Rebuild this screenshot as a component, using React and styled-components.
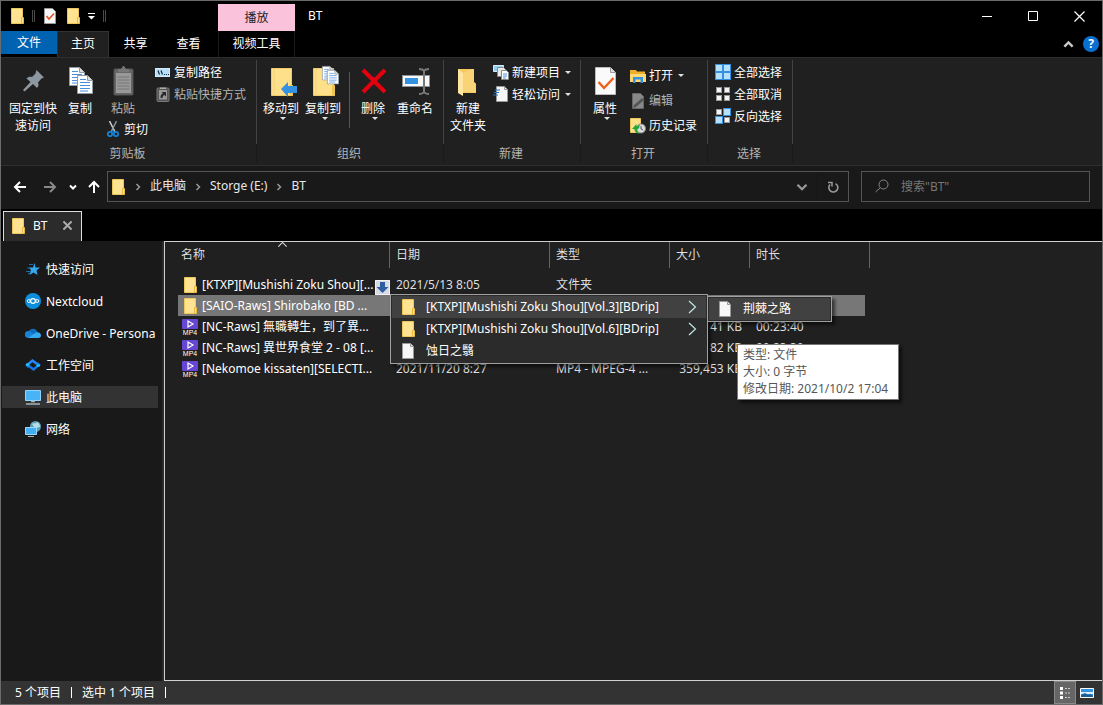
import React, { useState } from "react";
import styled, { createGlobalStyle, css } from "styled-components";

const GlobalStyle = createGlobalStyle`
  * {
    box-sizing: border-box;
  }
  body {
    margin: 0;
    background: #000;
    color: #fff;
    font: 12px/17px "Noto Sans", "Noto Sans CJK SC", sans-serif;
  }
  button,
  input {
    margin: 0;
    padding: 0;
    border: 0;
    background: none;
    color: inherit;
    font: inherit;
  }
  ul {
    margin: 0;
    padding: 0;
    list-style: none;
  }
  a {
    color: inherit;
    text-decoration: none;
  }
  svg {
    display: block;
    flex: none;
  }
`;

const Window = styled.div`
  display: flex;
  flex-direction: column;
  min-height: 100vh;
  border: 1px solid #6b6b6b;
`;

/* title bar */

const TitleBar = styled.header`
  display: flex;
  align-items: center;
  height: 30px;
`;
const QuickAccess = styled.div`
  display: flex;
  align-items: center;
  gap: 7px;
  width: 217px;
  padding-left: 8px;
`;
const QuickDivider = styled.span`
  width: 3px;
  height: 12px;
  border: solid #4a4a4a;
  border-width: 0 1px;
`;
const ContextTab = styled.div`
  display: flex;
  align-items: center;
  justify-content: center;
  align-self: flex-end;
  width: 77px;
  height: 27px;
  background: #fbc2db;
  color: #222;
`;
const Title = styled.h1`
  flex: 1;
  margin: 0;
  padding: 0 0 2px 13px;
  font-size: 12px;
  font-weight: 400;
`;
const WindowButton = styled.button`
  display: grid;
  place-items: center;
  width: 46px;
  height: 28px;
`;

/* ribbon tabs */

const TabRow = styled.nav`
  display: flex;
  align-items: flex-start;
  height: 26px;
`;
const RibbonTab = styled.button`
  width: ${({ $wide }) => ($wide ? 77 : 53)}px;
  height: 26px;
  padding-bottom: 2px;
  ${({ $file }) =>
    $file &&
    css`
      width: 56px;
      height: 23px;
      padding: 0;
      background: #0063b1;
    `}
  ${({ $active }) =>
    $active &&
    css`
      width: 52px;
      height: 27px;
      padding-bottom: 4px;
      background: #202020;
      border: 1px solid #333;
      border-bottom: 0;
    `}
  ${({ $wide }) =>
    $wide &&
    css`
      margin-left: 3px;
      border: solid #191919;
      border-width: 0 1px;
    `}
`;
const TabTools = styled.div`
  display: flex;
  align-items: center;
  align-self: stretch;
  gap: 9px;
  margin-left: auto;
  padding-right: 3px;
  color: #c8c8c8;
`;
const HelpButton = styled.button`
  width: 16px;
  height: 16px;
  border-radius: 50%;
  background: #0a6fd0;
  color: #fff;
  font-weight: 700;
  line-height: 16px;
`;

/* ribbon */

const RibbonBar = styled.section`
  display: flex;
  height: 109px;
  padding: 2px 0;
  background: #202020;
  border: solid #2e2e2e;
  border-width: 1px 0;
`;
const Group = styled.div`
  display: flex;
  flex-direction: column;
  width: ${({ $width }) => $width}px;
`;
const GroupBody = styled.div`
  display: flex;
  height: 84px;
  padding-left: ${({ $inset }) => $inset}px;
  border-right: 1px solid #434343;
`;
const GroupLabel = styled.div`
  flex: 1;
  padding-right: 2px;
  border-right: 1px solid #191919;
  color: #b4b4b4;
  line-height: 19px;
  text-align: center;
`;
const BigButton = styled.button`
  display: flex;
  flex-direction: column;
  align-items: center;
  width: ${({ $width = 42 }) => $width}px;
  padding-top: 5px;
  color: ${({ disabled }) => (disabled ? "#b4b4b4" : "#fff")};
  white-space: pre-line;

  > svg:first-child {
    margin-bottom: 3px;
  }
  > svg + svg {
    margin-left: 4px;
  }
`;
const SmallStack = styled.div`
  display: flex;
  flex-direction: column;
  margin-left: ${({ $left = 0 }) => $left}px;
  padding-top: ${({ $top = 1 }) => $top}px;
`;
const SmallButton = styled.button`
  display: flex;
  align-items: center;
  gap: 3px;
  height: ${({ $height = 22 }) => $height}px;
  color: ${({ disabled }) => (disabled ? "#b4b4b4" : "#fff")};
  white-space: nowrap;

  > svg + svg {
    margin-left: 2px;
  }
`;
const PasteColumn = styled.div`
  width: 50px;
  margin-left: 5px;
  ${BigButton} {
    height: 58px;
  }
`;
const BodyDivider = styled.span`
  width: 1px;
  height: 56px;
  margin: 12px 2px 0 5px;
  background: #555;
`;

/* address bar */

const NavBar = styled.div`
  display: flex;
  align-items: center;
  height: 43px;
  padding: 0 12px 2px 4px;
  background: #191919;
`;
const NavButton = styled.button`
  display: grid;
  place-items: center;
  width: ${({ $width = 30 }) => $width}px;
  height: 30px;
  color: ${({ disabled }) => (disabled ? "#8a8a8a" : "#fff")};
`;
const Address = styled.div`
  display: flex;
  flex: 1;
  align-items: center;
  height: 31px;
  padding-left: 2px;
  border: 1px solid #535353;
  color: #e8e8e8;

  a {
    padding-bottom: 2px;
  }
`;
const Separator = styled.span`
  display: grid;
  place-items: center;
  width: 24px;
  color: #999;
`;
const AddressButton = styled.button`
  display: grid;
  place-items: center;
  width: 31px;
  height: 29px;
  border-left: 1px solid #151515;
  color: #999;
  &:first-of-type {
    margin-left: auto;
    border: 0;
  }
`;
const Search = styled.label`
  display: flex;
  align-items: center;
  gap: 11px;
  width: 229px;
  height: 31px;
  margin-left: 12px;
  padding: 0 13px;
  border: 1px solid #535353;
  color: #858585;

  input {
    flex: 1;
    min-width: 0;
    outline: 0;
  }
  input::placeholder {
    color: #777;
    opacity: 1;
  }
`;

/* folder tabs */

const FolderTabs = styled.div`
  display: flex;
  align-items: flex-end;
  height: 32px;
  padding-left: 2px;
`;
const FolderTab = styled.div`
  display: flex;
  align-items: center;
  gap: 7px;
  width: 79px;
  height: 30px;
  padding: 0 9px 2px 6px;
  background: #2b2b2b;
  border: 1px solid #ddd;
  border-bottom: 0;

  button {
    margin-left: auto;
    color: #aaa;
  }
`;

/* body */

const Body = styled.div`
  display: flex;
  flex: 1;
`;
const Sidebar = styled.nav`
  width: 163px;
  padding: 17px 4px 0 1px;
  background: #191919;
  border-right: 2px solid #2b2b2b;

  ul {
    display: grid;
    gap: 10px;
  }
`;
const SideLink = styled.a`
  display: flex;
  align-items: center;
  gap: 5px;
  height: 22px;
  padding-left: 23px;
  overflow: hidden;
  background: ${({ $active }) => ($active ? "#333" : "none")};
  white-space: nowrap;
`;
const MainPane = styled.main`
  position: relative;
  flex: 1;
  min-width: 0;
  padding-left: 13px;
  background: #202020;
  border: 1px solid #d0d0d0;
  border-right: 0;
`;
const Files = styled.table`
  width: 692px;
  table-layout: fixed;
  border-spacing: 0;
  color: #dedede;

  tbody::before {
    content: "";
    display: block;
    height: 6px;
  }
`;
const HeadCell = styled.th`
  position: relative;
  width: ${({ $width }) => $width}px;
  height: 26px;
  padding: 0 0 1px 6px;
  border-right: 1px solid #636363;
  font-weight: 400;
  text-align: left;

  &:first-child {
    padding-left: 3px;
  }
  svg {
    position: absolute;
    top: -3px;
    left: 99px;
  }
`;
const FileRow = styled.tr`
  td {
    height: 21px;
    padding: 0 0 0 6px;
    white-space: nowrap;
    ${({ $selected }) =>
      $selected &&
      css`
        background: #777 padding-box;
      `}
  }
  td:first-child {
    position: relative;
    padding-left: 4px;
    color: #fff;
  }
  td:nth-child(4) {
    padding-right: 8px;
    text-align: right;
  }
  td:last-child {
    border-right: 5px solid transparent;
  }
`;
const FileName = styled.span`
  display: flex;
  align-items: center;
  gap: 4px;
`;
const ExpandBadge = styled.button`
  position: absolute;
  right: 0;
  bottom: 0;
  width: 15px;
  height: 15px;
  background: #d6dbe3;
`;

/* popups */

const Popup = styled.ul`
  position: absolute;
  top: ${({ $top }) => $top}px;
  left: ${({ $left }) => $left}px;
  width: ${({ $width }) => $width}px;
  padding: 1px;
  background: #2b2b2b;
  border: 1px solid #a0a0a0;
  box-shadow: 3px 3px 3px rgba(0, 0, 0, 0.55);
`;
const PopupItem = styled.button`
  display: flex;
  align-items: center;
  gap: 10px;
  width: 100%;
  height: 22px;
  padding: 0 6px 1px 8px;
  background: ${({ $active }) => ($active ? "#414141" : "none")};
  white-space: nowrap;

  svg:nth-of-type(2) {
    margin-left: auto;
  }
`;
const Tooltip = styled.div`
  position: absolute;
  top: 102px;
  left: 572px;
  width: 162px;
  padding: 1px 0 2px 5px;
  background: #fff;
  border: 1px solid #767676;
  box-shadow: 3px 3px 3px rgba(0, 0, 0, 0.55);
  color: #575757;
  white-space: nowrap;
`;

/* status bar */

const StatusBar = styled.footer`
  display: flex;
  align-items: center;
  gap: 10px;
  height: 23px;
  padding-left: 14px;
  background: #333;
`;
const StatusDivider = styled.span`
  width: 1px;
  height: 11px;
  background: #fff;
`;
const ViewButtons = styled.div`
  display: flex;
  margin-left: auto;
  padding-right: 4px;
`;
const ViewButton = styled.button`
  display: grid;
  place-items: center;
  width: 22px;
  height: 23px;
  ${({ $active }) =>
    $active &&
    css`
      background: #666;
      border: 1px solid #888;
    `}
`;

/* icons */

const Icon = ({ size = 16, box = size, children }) => (
  <svg width={size} height={size} viewBox={`0 0 ${box} ${box}`} fill="none" aria-hidden="true">
    {children}
  </svg>
);

const FolderIcon = () => (
  <Icon>
    <path d="M2.500.5h11v15h-11z" fill="#ffe391" stroke="#efc65a" />
    <path d="M12.500 9.500h2v6h-2z" fill="#ffe391" stroke="#e6b846" />
  </Icon>
);
const FileIcon = () => (
  <Icon>
    <path d="M2.500.5h8l3 3v12h-11z" fill="#f7f7f7" stroke="#999" />
    <path d="M10.500.5v3h3" stroke="#999" fill="#ddd" />
  </Icon>
);
const CheckPageIcon = () => (
  <Icon>
    <path d="M2.500.5h8l3 3v12h-11z" fill="#f7f7f7" stroke="#999" />
    <path d="M4.500 8l2.500 3 5-5.500" stroke="#e8501c" strokeWidth="1.500" />
  </Icon>
);
const Mp4Icon = () => (
  <Icon>
    <rect width="16" height="10" rx="1" fill="#6547d3" />
    <path d="M6 2v6l5-3z" stroke="#fff" strokeWidth="1.200" />
    <text x="8" y="16" fill="#fff" fontFamily="Liberation Sans, sans-serif" fontSize="7" textAnchor="middle">
      MP4
    </text>
  </Icon>
);
const Caret = ({ width = 6 }) => (
  <svg width={width} height="3" viewBox="0 0 6 3" aria-hidden="true">
    <path d="M0 0h6L3 3z" fill="#e0e0e0" />
  </svg>
);
const Chevron = ({ size = 8, turn = 0, thick = 1.5, color = "currentColor" }) => (
  <Icon size={size} box={8}>
    <path d="M2.500 1l3 3-3 3" stroke={color} strokeWidth={thick} transform={`rotate(${turn} 4 4)`} />
  </Icon>
);
const MenuArrow = () => (
  <Icon>
    <path d="M5 2l6.500 6L5 14" stroke="#bfe6e6" strokeWidth="1.200" />
  </Icon>
);
const PinIcon = () => (
  <Icon size={32}>
    <path
      d="M19.500 5l7.500 7.500-2.500 1-3.500 4c1 2.500.5 4-1 5.500l-4-4-8.500 7.500-1.500-1.500 7.500-8-4-3.500c1.500-1.500 3-2 5.500-1.500l3.500-3.500z"
      fill="#8c979f"
    />
  </Icon>
);
const Page = ({ x, y, scale = 1 }) => (
  <g transform={`translate(${x} ${y}) scale(${scale})`}>
    <path d="M.5.5h10l5 5v13H.5z" fill="#fff" stroke="#8f9aa3" />
    <path d="M10.500.5v5h5" fill="#ddd" stroke="#8f9aa3" />
    <path d="M3 4.500h6M3 7.500h10M3 10.500h10M3 13.500h10M3 16h8" stroke="#4a8ee0" />
  </g>
);
const CopyIcon = () => (
  <Icon size={32}>
    <Page x={5} y={2} />
    <Page x={13} y={10} />
  </Icon>
);
const PasteIcon = () => (
  <Icon size={32}>
    <rect x="7" y="4" width="19" height="26" rx="1" fill="#666" stroke="#555" />
    <rect x="9" y="8" width="15" height="20" fill="#999" />
    <path d="M10.500 12h12M10.500 15h12M10.500 18h12M10.500 21h12M10.500 24h12" stroke="#777" />
    <path d="M11 7V4h3l2-3h1l2 3h3v3z" fill="#777" />
  </Icon>
);
const CutIcon = () => (
  <Icon>
    <path d="M4.500 0l5.500 11" stroke="#d0d4d8" strokeWidth="1.500" />
    <path d="M11.500 0L6 11" stroke="#8b949b" strokeWidth="1.500" />
    <circle cx="5" cy="13" r="2.200" stroke="#1681d1" strokeWidth="1.800" />
    <circle cx="11" cy="13" r="2.200" stroke="#1681d1" strokeWidth="1.800" />
    <path d="M7 11l1-2 1 2" stroke="#1681d1" />
  </Icon>
);
const PathIcon = () => (
  <Icon>
    <rect x=".5" y="4.500" width="14" height="8" fill="#b9def8" stroke="#d3ecfc" />
    <path d="M3 6.500l1.500 4M6 6.500l1.500 4M9 10.500h1M11 10.500h1M13 10.500h1" stroke="#102c42" strokeWidth="1.200" />
  </Icon>
);
const PasteLinkIcon = () => (
  <Icon>
    <rect x="2" y="2" width="12" height="13.500" rx="1" fill="#555" stroke="#777" />
    <path d="M4 4h8v9.500H4z" fill="#999" />
    <path d="M5 3V1.500h6V3z" fill="#aaa" />
    <path d="M5.500 12c0-3 1-4 2.500-4.500L6.500 6H11v4.500L9.500 9C8 9.500 7.500 10.500 7.500 12z" fill="#282828" />
  </Icon>
);
const BigFolder = () => (
  <>
    <path d="M6.500 3.500h20v17h1v10h-21z" fill="#ffe08a" stroke="#f0ca68" />
    <path d="M9 4v26" stroke="#f2d078" />
    <path d="M25 20h2.500v10.500H25z" fill="#f0c449" />
  </>
);
const MoveToIcon = () => (
  <Icon size={32}>
    <BigFolder />
    <path d="M16 24l7-7v4h9v7h-9v4z" fill="#3492e0" />
  </Icon>
);
const CopyToIcon = () => (
  <Icon size={32}>
    <BigFolder />
    <Page x={15} y={1} scale={0.75} />
    <Page x={20} y={5} scale={0.75} />
  </Icon>
);
const DeleteIcon = () => (
  <Icon size={32}>
    <path d="M6 5l22 22M28 5L6 27" stroke="#e5000f" strokeWidth="4" />
  </Icon>
);
const RenameIcon = () => (
  <Icon size={32}>
    <rect x="3.500" y="10.500" width="27" height="11" fill="#f8f8f8" stroke="#8c9298" />
    <path d="M6 13h13v6H6z" fill="#3492e0" />
    <path d="M20 4c3 0 4 .5 5 2 1-1.500 2-2 5-2M25 5v23M20 29c3 0 4-.5 5-2 1 1.500 2 2 5 2" stroke="#777" strokeWidth="2" />
  </Icon>
);
const NewFolderIcon = () => (
  <Icon size={32}>
    <path d="M6 4h16v13l2 2v9H6z" fill="#f5c95e" />
    <path d="M6 4l5 4v23l-5-3z" fill="#ffe6a0" />
    <path d="M11 8l9-4h2v13l2 2v8H11z" fill="#f9d477" />
  </Icon>
);
const NewItemIcon = () => (
  <Icon>
    <path d="M.5 1.500h10v6H.5z" fill="#8fcdf2" stroke="#d8edf8" />
    <path d="M4.500 3.500h6l2 2v7h-8z" fill="#e8e8e8" stroke="#888" />
    <path d="M8.500 6.500h5l2 2v7h-7z" fill="#fff" stroke="#888" />
    <path d="M10 10h4M10 12h4M10 14h3" stroke="#4a8ee0" />
  </Icon>
);
const EasyAccessIcon = () => (
  <Icon>
    <path d="M3.500.5h8l3 3v12h-11z" fill="#f7f7f7" stroke="#999" />
    <path d="M11.500.5v3h3" stroke="#999" />
    <path d="M2 4h5M1 6.500h5M0 9h5" stroke="#2277c9" strokeWidth="1.200" />
  </Icon>
);
const PropertiesIcon = () => (
  <Icon size={32}>
    <path d="M6.500 2.500h15l5 5v22h-20z" fill="#fafafa" stroke="#bbb" />
    <path d="M21.500 2.500v5h5" fill="#ddd" stroke="#999" />
    <path d="M9.500 17l5.500 6 9.500-10" stroke="#f0601a" strokeWidth="2.400" />
  </Icon>
);
const OpenIcon = () => (
  <Icon>
    <path d="M0 2h6l1 1.500h8V14H0z" fill="#eeb02c" />
    <path d="M0 6h16v8H0z" fill="#ffda72" />
    <path d="M3 15V9h10v6h-2.500v-3.500h-5V15z" fill="#3492e0" />
  </Icon>
);
const EditIcon = () => (
  <Icon>
    <path d="M2.500.5h8l3 3v12h-11z" fill="#888" stroke="#666" />
    <path d="M4 12l8-7 2 2-8 7-3 1z" fill="#555" />
  </Icon>
);
const HistoryIcon = () => (
  <Icon>
    <path d="M.5.5h10v14H.5z" fill="#ffe08a" stroke="#efc65a" />
    <circle cx="11" cy="10.500" r="4.500" fill="#ddd" stroke="#888" />
    <path d="M11 8v3l2 1" stroke="#555" />
    <path d="M2 11l4.500-5v2.500C8 8 9 7 9.500 6 10 9 9 11 7 11.500c0 2 1 3 3 4C6 15.500 4.500 13.500 4.500 11z" fill="#20a63c" />
  </Icon>
);
const TILES = [
  [1, 1],
  [9, 1],
  [1, 9],
  [9, 9]
];
const TilesIcon = ({ on }) => (
  <Icon>
    {TILES.map(([x, y], i) =>
      on.includes(i) ? (
        <rect key={i} x={x - 0.5} y={y - 0.5} width="7" height="7" fill="#b7e0fb" stroke="#3492e0" />
      ) : (
        <rect key={i} x={x + 0.5} y={y + 0.5} width="5" height="5" fill="#f5f5f5" stroke="#999" />
      )
    )}
  </Icon>
);
const ArrowIcon = ({ turn = 0 }) => (
  <Icon size={14}>
    <path d="M13 7H2M7 2L2 7l5 5" stroke="currentColor" strokeWidth="2" transform={`rotate(${turn} 7 7)`} />
  </Icon>
);
const RefreshIcon = () => (
  <Icon size={12}>
    <path d="M8.500 2.600A4.500 4.500 0 1 1 3 3.500" stroke="currentColor" strokeWidth="1.600" />
    <path d="M1 1.500h4v4" stroke="currentColor" strokeWidth="1.500" />
  </Icon>
);
const SearchIcon = () => (
  <Icon size={15}>
    <circle cx="8.500" cy="5.500" r="4.500" stroke="currentColor" />
    <path d="M5 9l-4.500 4" stroke="currentColor" />
  </Icon>
);
const CloseIcon = ({ size = 11, thick = 1.2 }) => (
  <Icon size={size} box={11}>
    <path d="M.5.5l10 10M10.500.5l-10 10" stroke="currentColor" strokeWidth={thick} />
  </Icon>
);
const StarIcon = () => (
  <Icon>
    <path d="M9.500 2l1 4.500h4.500l-3.500 3 1 4.500-4-2.500-4 2.500 1.500-4.500L4 6.500h4z" fill="#35a8f0" />
    <path d="M4 3.500h4M2 7h4M1 10.500h5M3 13l2-1" stroke="#1c6ea8" />
  </Icon>
);
const NextcloudIcon = () => (
  <Icon>
    <circle cx="8" cy="8" r="8" fill="#0b8fdd" />
    <circle cx="8" cy="8" r="2.400" stroke="#fff" strokeWidth="1.200" />
    <circle cx="3.800" cy="8" r="1.500" stroke="#fff" />
    <circle cx="12.200" cy="8" r="1.500" stroke="#fff" />
  </Icon>
);
const OneDriveIcon = () => (
  <Icon>
    <path d="M3 8a5 5 0 0 1 9-2l2 4H2z" fill="#0f6cbd" />
    <path d="M3.500 13A3.500 3.500 0 1 1 5 6.500l8 6z" fill="#1684d8" />
    <path d="M3 13l7-5c2-1.500 6-.5 6 2.500 0 1.500-1 2.500-2.500 2.500z" fill="#35a8ee" />
  </Icon>
);
const WorkspaceIcon = () => (
  <Icon>
    <path d="M4 10L2 8l5.500-4.500L12 7" stroke="#2686ff" strokeWidth="2.500" />
    <path d="M12 6l2 2-5.500 4.500L4 9" stroke="#1676e8" strokeWidth="2.500" />
    <path d="M1 7.500h3.500M11.500 8.500H15" stroke="#18c9ef" strokeWidth="1.800" />
  </Icon>
);
const ComputerIcon = () => (
  <Icon>
    <path d="M.5 1.500h15v10H.5z" fill="#48b3f5" stroke="#8ed5ff" />
    <path d="M6 12.500h4M1 15h14" stroke="#a9b5bd" strokeWidth="1.500" />
  </Icon>
);
const NetworkIcon = () => (
  <Icon>
    <circle cx="10.500" cy="5.500" r="5.500" fill="#5ba0b8" />
    <path d="M7 3c2-2 3 1 5-2 2 1 3 3 3 5-3 0-4 2-5 1z" fill="#b8dce6" />
    <path d="M.5 6.500h11v7H.5z" fill="#42aef3" stroke="#9bd9ff" />
    <path d="M3 15.500h6" stroke="#a9b5bd" />
  </Icon>
);

/* data */

const LINKS = [
  { icon: StarIcon, text: "快速访问" },
  { icon: NextcloudIcon, text: "Nextcloud" },
  { icon: OneDriveIcon, text: "OneDrive - Persona" },
  { icon: WorkspaceIcon, text: "工作空间" },
  { icon: ComputerIcon, text: "此电脑" },
  { icon: NetworkIcon, text: "网络" }
];

const COLUMNS = [
  { text: "名称", width: 212 },
  { text: "日期", width: 160 },
  { text: "类型", width: 120 },
  { text: "大小", width: 80 },
  { text: "时长", width: 120 }
];

const FILES = [
  { icon: FolderIcon, name: "[KTXP][Mushishi Zoku Shou][...", date: "2021/5/13 8:05", type: "文件夹" },
  { icon: FolderIcon, name: "[SAIO-Raws] Shirobako [BD ..." },
  { icon: Mp4Icon, name: "[NC-Raws] 無職轉生，到了異...", size: "41 KB", length: "00:23:40" },
  { icon: Mp4Icon, name: "[NC-Raws] 異世界食堂 2 - 08 [...", size: "82 KB", length: "00:23:39" },
  {
    icon: Mp4Icon,
    name: "[Nekomoe kissaten][SELECTI...",
    date: "2021/11/20 8:27",
    type: "MP4 - MPEG-4 ...",
    size: "359,453 KB"
  }
];

const Small = ({ icon, text, menu, ...rest }) => (
  <SmallButton {...rest}>
    {icon}
    {text}
    {menu && <Caret />}
  </SmallButton>
);

const Ribbon = () => (
  <RibbonBar>
    <Group $width={256}>
      <GroupBody $inset={5}>
        <BigButton $width={54}>
          <PinIcon />
          {"固定到快\n速访问"}
        </BigButton>
        <BigButton $width={40}>
          <CopyIcon />
          复制
        </BigButton>
        <PasteColumn>
          <BigButton $width={36} disabled>
            <PasteIcon />
            粘贴
          </BigButton>
          <Small icon={<CutIcon />} text="剪切" />
        </PasteColumn>
        <SmallStack>
          <Small icon={<PathIcon />} text="复制路径" />
          <Small icon={<PasteLinkIcon />} text="粘贴快捷方式" disabled />
        </SmallStack>
      </GroupBody>
      <GroupLabel>剪贴板</GroupLabel>
    </Group>
    <Group $width={187}>
      <GroupBody $inset={3}>
        <BigButton>
          <MoveToIcon />
          移动到
          <Caret />
        </BigButton>
        <BigButton>
          <CopyToIcon />
          复制到
          <Caret />
        </BigButton>
        <BodyDivider />
        <BigButton>
          <DeleteIcon />
          删除
          <Caret />
        </BigButton>
        <BigButton>
          <RenameIcon />
          重命名
        </BigButton>
      </GroupBody>
      <GroupLabel>组织</GroupLabel>
    </Group>
    <Group $width={137}>
      <GroupBody $inset={3}>
        <BigButton>
          <NewFolderIcon />
          {"新建\n文件夹"}
        </BigButton>
        <SmallStack $left={4}>
          <Small icon={<NewItemIcon />} text="新建项目" menu />
          <Small icon={<EasyAccessIcon />} text="轻松访问" menu />
        </SmallStack>
      </GroupBody>
      <GroupLabel>新建</GroupLabel>
    </Group>
    <Group $width={127}>
      <GroupBody $inset={3}>
        <BigButton>
          <PropertiesIcon />
          属性
          <Caret />
        </BigButton>
        <SmallStack $left={4} $top={3}>
          <Small $height={25} icon={<OpenIcon />} text="打开" menu />
          <Small $height={25} icon={<EditIcon />} text="编辑" disabled />
          <Small $height={25} icon={<HistoryIcon />} text="历史记录" />
        </SmallStack>
      </GroupBody>
      <GroupLabel>打开</GroupLabel>
    </Group>
    <Group $width={85}>
      <GroupBody $inset={7}>
        <SmallStack>
          <Small icon={<TilesIcon on={[0, 1, 2, 3]} />} text="全部选择" />
          <Small icon={<TilesIcon on={[]} />} text="全部取消" />
          <Small icon={<TilesIcon on={[1, 2]} />} text="反向选择" />
        </SmallStack>
      </GroupBody>
      <GroupLabel>选择</GroupLabel>
    </Group>
  </RibbonBar>
);

const FileList = ({ selected, onSelect }) => (
  <Files>
    <thead>
      <tr>
        {COLUMNS.map(({ text, width }, i) => (
          <HeadCell key={text} $width={width}>
            {text}
            {i === 0 && <Chevron size={11} turn={-90} thick={0.8} />}
          </HeadCell>
        ))}
      </tr>
    </thead>
    <tbody>
      {FILES.map(({ icon: FileTypeIcon, name, date, type, size, length }, i) => (
        <FileRow key={name} $selected={i === selected} onClick={() => onSelect(i)}>
          <td>
            <FileName>
              <FileTypeIcon />
              {name}
            </FileName>
            {i === 0 && (
              <ExpandBadge aria-label="展开">
                <Icon size={15}>
                  <path d="M.5.5h14v14H.5z" fill="#d6dbe3" stroke="#f0f2f5" />
                  <path d="M5 2h5v5h3.500l-6 6-6-6H5z" fill="#2f5d9f" />
                </Icon>
              </ExpandBadge>
            )}
          </td>
          <td>{date}</td>
          <td>{type}</td>
          <td>{size}</td>
          <td>{length}</td>
        </FileRow>
      ))}
    </tbody>
  </Files>
);

const App = () => {
  const [selected, setSelected] = useState(1);
  return (
    <Window>
      <GlobalStyle />
      <TitleBar>
        <QuickAccess>
          <FolderIcon />
          <QuickDivider />
          <CheckPageIcon />
          <FolderIcon />
          <Icon size={8}>
            <path d="M0 1.500h7" stroke="#fff" />
            <path d="M0 4h7L3.500 7.500z" fill="#fff" />
          </Icon>
          <QuickDivider />
        </QuickAccess>
        <ContextTab>播放</ContextTab>
        <Title>BT</Title>
        <WindowButton aria-label="最小化">
          <Icon size={10}>
            <path d="M0 5.500h10" stroke="#fff" />
          </Icon>
        </WindowButton>
        <WindowButton aria-label="最大化">
          <Icon size={10}>
            <path d="M.5.5h9v9h-9z" stroke="#fff" />
          </Icon>
        </WindowButton>
        <WindowButton aria-label="关闭">
          <CloseIcon />
        </WindowButton>
      </TitleBar>
      <TabRow>
        <RibbonTab $file>文件</RibbonTab>
        <RibbonTab $active>主页</RibbonTab>
        <RibbonTab>共享</RibbonTab>
        <RibbonTab>查看</RibbonTab>
        <RibbonTab $wide>视频工具</RibbonTab>
        <TabTools>
          <Chevron size={11} turn={-90} thick={1.8} />
          <HelpButton>?</HelpButton>
        </TabTools>
      </TabRow>
      <Ribbon />
      <NavBar>
        <NavButton aria-label="后退">
          <ArrowIcon />
        </NavButton>
        <NavButton aria-label="前进" disabled>
          <ArrowIcon turn={180} />
        </NavButton>
        <NavButton aria-label="最近" $width={16}>
          <Chevron turn={90} thick={2} />
        </NavButton>
        <NavButton aria-label="向上" $width={26}>
          <ArrowIcon turn={90} />
        </NavButton>
        <Address>
          <FolderIcon />
          {["此电脑", "Storge (E:)", "BT"].map(part => (
            <React.Fragment key={part}>
              <Separator>
                <Chevron />
              </Separator>
              <a href="#path">{part}</a>
            </React.Fragment>
          ))}
          <AddressButton aria-label="历史">
            <Chevron size={12} turn={90} />
          </AddressButton>
          <AddressButton aria-label="刷新">
            <RefreshIcon />
          </AddressButton>
        </Address>
        <Search>
          <SearchIcon />
          <input type="search" aria-label="搜索" placeholder={'搜索"BT"'} />
        </Search>
      </NavBar>
      <FolderTabs>
        <FolderTab>
          <FolderIcon />
          BT
          <button aria-label="关闭标签">
            <CloseIcon size={9} thick={2.5} />
          </button>
        </FolderTab>
      </FolderTabs>
      <Body>
        <Sidebar>
          <ul>
            {LINKS.map(({ icon: LinkIcon, text }) => (
              <li key={text}>
                <SideLink href="#place" $active={text === "此电脑"}>
                  <LinkIcon />
                  {text}
                </SideLink>
              </li>
            ))}
          </ul>
        </Sidebar>
        <MainPane>
          <FileList selected={selected} onSelect={setSelected} />
          <Popup $top={52} $left={225} $width={318}>
            <li>
              <PopupItem $active>
                <FolderIcon />
                [KTXP][Mushishi Zoku Shou][Vol.3][BDrip]
                <MenuArrow />
              </PopupItem>
            </li>
            <li>
              <PopupItem>
                <FolderIcon />
                [KTXP][Mushishi Zoku Shou][Vol.6][BDrip]
                <MenuArrow />
              </PopupItem>
            </li>
            <li>
              <PopupItem>
                <FileIcon />
                蚀日之翳
              </PopupItem>
            </li>
          </Popup>
          <Popup $top={54} $left={542} $width={125}>
            <li>
              <PopupItem $active>
                <FileIcon />
                荆棘之路
              </PopupItem>
            </li>
          </Popup>
          <Tooltip role="tooltip">
            类型: 文件
            <br />
            大小: 0 字节
            <br />
            修改日期: 2021/10/2 17:04
          </Tooltip>
        </MainPane>
      </Body>
      <StatusBar>
        5 个项目
        <StatusDivider />
        选中 1 个项目
        <StatusDivider />
        <ViewButtons>
          <ViewButton aria-label="详细信息" $active>
            <Icon>
              <path d="M3 2h3v3H3zM3 6.500h3v3H3zM3 11h3v3H3z" fill="#fff" />
              <path d="M8 3.500h2M11 3.500h2M8 8h2M11 8h2M8 12.500h2M11 12.500h2" stroke="#ccc" />
            </Icon>
          </ViewButton>
          <ViewButton aria-label="大图标">
            <Icon>
              <path d="M1.500 3.500h13v9h-13z" fill="#3492e0" stroke="#fff" />
              <path d="M2 7h12v2H2z" fill="#d8ecfa" />
              <path d="M2 12v-2l4-2 3 2 2-1 3 2v1z" fill="#1d5d92" />
            </Icon>
          </ViewButton>
        </ViewButtons>
      </StatusBar>
    </Window>
  );
};

export default App;
